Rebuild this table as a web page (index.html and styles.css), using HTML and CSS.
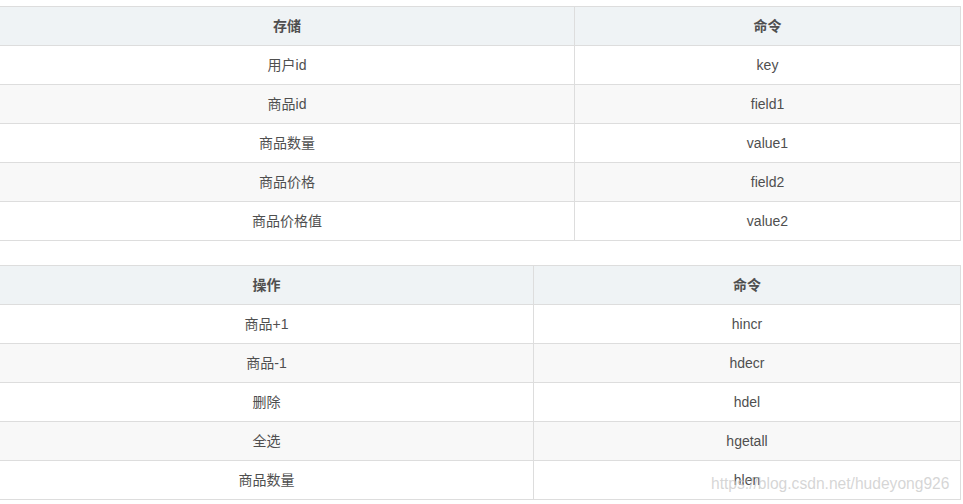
FILE: index.html
```html
<!DOCTYPE html>
<html lang="zh-CN">
<head>
<meta charset="utf-8">
<title>表格</title>
<link rel="stylesheet" href="styles.css">
</head>
<body>
<div class="page">
  <table class="tbl tbl-a">
    <colgroup><col class="c1"><col class="c2"></colgroup>
    <thead><tr><th>存储</th><th>命令</th></tr></thead>
    <tbody>
      <tr><td>用户id</td><td>key</td></tr>
      <tr><td>商品id</td><td>field1</td></tr>
      <tr><td>商品数量</td><td>value1</td></tr>
      <tr><td>商品价格</td><td>field2</td></tr>
      <tr><td>商品价格值</td><td>value2</td></tr>
    </tbody>
  </table>
  <table class="tbl tbl-b">
    <colgroup><col class="c1"><col class="c2"></colgroup>
    <thead><tr><th>操作</th><th>命令</th></tr></thead>
    <tbody>
      <tr><td>商品+1</td><td>hincr</td></tr>
      <tr><td>商品-1</td><td>hdecr</td></tr>
      <tr><td>删除</td><td>hdel</td></tr>
      <tr><td>全选</td><td>hgetall</td></tr>
      <tr><td>商品数量</td><td>hlen</td></tr>
    </tbody>
  </table>
  <div class="watermark">https://blog.csdn.net/hudeyong926</div>
</div>
</body>
</html>
```
FILE: styles.css
```css
html, body {
  margin: 0;
  padding: 0;
  background: #ffffff;
}
.page {
  position: relative;
  width: 963px;
  height: 504px;
  padding-top: 6px;
  box-sizing: border-box;
  overflow: hidden;
  font-family: "Liberation Sans", "Noto Sans CJK SC", sans-serif;
  font-size: 14px;
  color: #4f4f4f;
}
.tbl {
  border-collapse: separate;
  border-spacing: 0;
  table-layout: fixed;
  width: 962px;
  margin-left: -1px;
  border-top: 1px solid #dddddd;
  border-left: 1px solid #dddddd;
}
.tbl th, .tbl td {
  box-sizing: border-box;
  height: 39px;
  padding: 0 8px;
  text-align: center;
  vertical-align: middle;
  border-right: 1px solid #dddddd;
  border-bottom: 1px solid #dddddd;
  line-height: 22px;
}
.tbl th {
  background: #eff3f5;
  font-weight: bold;
}
.tbl tbody tr:nth-child(even) td {
  background: #f8f8f8;
}
.tbl-a .c1 { width: 575px; }
.tbl-a .c2 { width: 386px; }
.tbl-b { margin-top: 24px; }
.tbl-b .c1 { width: 534px; }
.tbl-b .c2 { width: 427px; }
.watermark {
  position: absolute;
  left: 711px;
  top: 475px;
  font-family: "Liberation Sans", sans-serif;
  font-size: 15.6px;
  color: rgba(200, 200, 200, 0.75);
  white-space: nowrap;
}
```
